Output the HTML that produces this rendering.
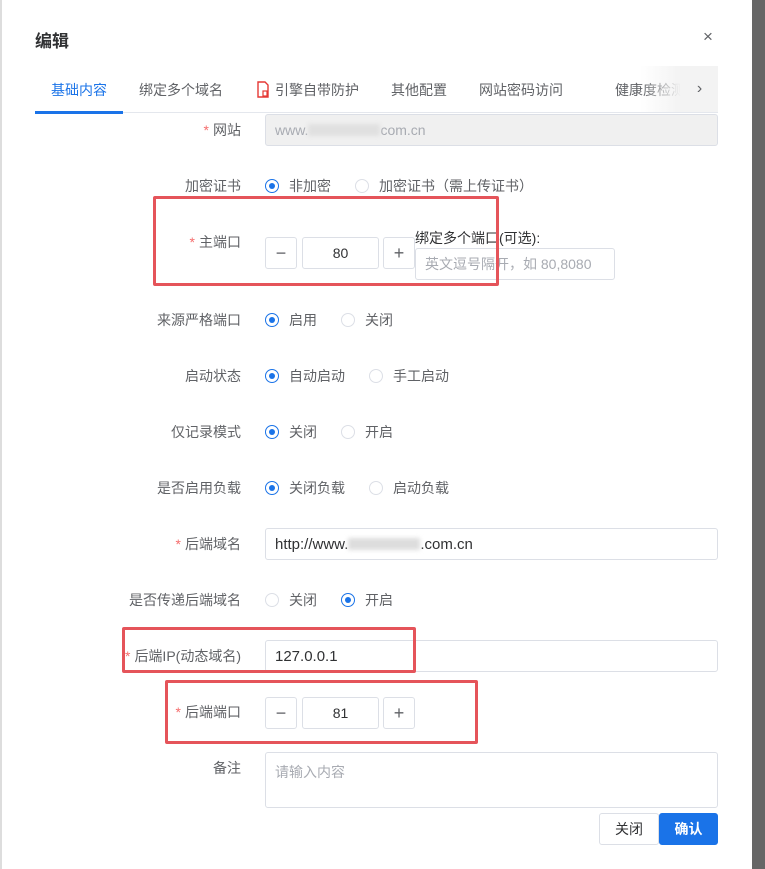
<!DOCTYPE html>
<html><head><meta charset="utf-8"><style>
*{margin:0;padding:0;box-sizing:border-box}
body{width:765px;height:869px;background:#fff;position:relative;overflow:hidden;font-family:"Liberation Sans","Noto Sans CJK SC",sans-serif;font-size:14px;color:#606266}
.a{position:absolute;white-space:nowrap}
.lbl{position:absolute;right:524px;font-size:14px;color:#606266;line-height:16px}
.lbl i{color:#f56c6c;font-style:normal;margin-right:4px}
.inp{position:absolute;border:1px solid #dcdfe6;border-radius:3px;background:#fff;font-size:14px;color:#303133;padding-left:9px;display:flex;align-items:center}
.btn{position:absolute;border:1px solid #dcdfe6;border-radius:3px;background:#fff;display:flex;align-items:center;justify-content:center;font-size:18px;color:#606266}
.r{position:absolute;width:14px;height:14px;border-radius:50%;border:1px solid #dcdfe6;background:#fff}
.r.on{border-color:#1a73e8}
.r.on:after{content:"";position:absolute;left:3px;top:3px;width:6px;height:6px;border-radius:50%;background:#1a73e8}
.rt{position:absolute;font-size:14px;color:#606266;line-height:16px}
.red{position:absolute;border:3px solid #e5545a;border-radius:2px}
.tab{position:absolute;top:80px;font-size:14px;color:#606266}
</style></head><body>
<div class="a" style="left:0;top:0;width:2px;height:869px;background:#ddd"></div>
<div class="a" style="left:752px;top:0;width:13px;height:869px;background:#666"></div>
<div class="a" style="left:35px;top:27px;font-size:17px;font-weight:bold;color:#303133">编辑</div>
<div class="a" style="left:703px;top:27px;font-size:17px;color:#606266">×</div>

<div class="a" style="left:35px;top:112px;width:683px;height:1px;background:#e4e7ed"></div>
<div class="a" style="left:35px;top:111px;width:88px;height:3px;background:#1a73e8"></div>
<div class="tab" style="left:51px;color:#1a73e8">基础内容</div>
<div class="tab" style="left:139px">绑定多个域名</div>
<svg class="a" style="left:256px;top:81px" width="14" height="17" viewBox="0 0 14 17"><path d="M2 1h7l3 3v12H2z" fill="none" stroke="#e53935" stroke-width="1.4"/><rect x="7" y="10" width="4" height="5" fill="none" stroke="#e53935" stroke-width="1.2"/></svg>
<div class="tab" style="left:275px">引擎自带防护</div>
<div class="tab" style="left:391px">其他配置</div>
<div class="tab" style="left:479px">网站密码访问</div>
<div class="tab" style="left:615px">健康度检测</div>
<div class="a" style="left:640px;top:66px;width:41px;height:46px;background:linear-gradient(to right,rgba(255,255,255,0),#f3f3f3)"></div>
<div class="a" style="left:681px;top:66px;width:37px;height:46px;background:#f3f3f3;text-align:center;line-height:46px;font-size:16px;color:#606266">›</div>

<div class="lbl" style="top:122px"><i>*</i>网站</div>
<div class="inp" style="left:265px;top:114px;width:453px;height:32px;background:#f0f0f0;color:#a8abb2">www.<span style="display:inline-block;width:72px;height:12px;background:#e0e0e0;filter:blur(2px)"></span>com.cn</div>

<div class="lbl" style="top:178px">加密证书</div>
<div class="r on" style="left:265px;top:179px"></div><div class="rt" style="left:289px;top:178px">非加密</div>
<div class="r" style="left:355px;top:179px"></div><div class="rt" style="left:379px;top:178px">加密证书（需上传证书）</div>

<div class="lbl" style="top:234px"><i>*</i>主端口</div>
<div class="btn" style="left:265px;top:237px;width:32px;height:32px">−</div>
<div class="inp" style="left:302px;top:237px;width:77px;height:32px;justify-content:center;padding:0">80</div>
<div class="btn" style="left:383px;top:237px;width:32px;height:32px">+</div>
<div class="a" style="left:415px;top:228px;font-size:14px;color:#303133">绑定多个端口(可选):</div>
<div class="inp" style="left:415px;top:248px;width:200px;height:32px;color:#a8abb2;font-size:14px">英文逗号隔开，如 80,8080</div>

<div class="lbl" style="top:312px">来源严格端口</div>
<div class="r on" style="left:265px;top:313px"></div><div class="rt" style="left:289px;top:312px">启用</div>
<div class="r" style="left:341px;top:313px"></div><div class="rt" style="left:365px;top:312px">关闭</div>

<div class="lbl" style="top:368px">启动状态</div>
<div class="r on" style="left:265px;top:369px"></div><div class="rt" style="left:289px;top:368px">自动启动</div>
<div class="r" style="left:369px;top:369px"></div><div class="rt" style="left:393px;top:368px">手工启动</div>

<div class="lbl" style="top:424px">仅记录模式</div>
<div class="r on" style="left:265px;top:425px"></div><div class="rt" style="left:289px;top:424px">关闭</div>
<div class="r" style="left:341px;top:425px"></div><div class="rt" style="left:365px;top:424px">开启</div>

<div class="lbl" style="top:480px">是否启用负载</div>
<div class="r on" style="left:265px;top:481px"></div><div class="rt" style="left:289px;top:480px">关闭负载</div>
<div class="r" style="left:369px;top:481px"></div><div class="rt" style="left:393px;top:480px">启动负载</div>

<div class="lbl" style="top:536px"><i>*</i>后端域名</div>
<div class="inp" style="left:265px;top:528px;width:453px;height:32px;font-size:15px">http://www.<span style="display:inline-block;width:72px;height:12px;background:#ddd;filter:blur(2px)"></span>.com.cn</div>

<div class="lbl" style="top:592px">是否传递后端域名</div>
<div class="r" style="left:265px;top:593px"></div><div class="rt" style="left:289px;top:592px">关闭</div>
<div class="r on" style="left:341px;top:593px"></div><div class="rt" style="left:365px;top:592px">开启</div>

<div class="lbl" style="top:648px"><i>*</i>后端IP(动态域名)</div>
<div class="inp" style="left:265px;top:640px;width:453px;height:32px;font-size:15px">127.0.0.1</div>

<div class="lbl" style="top:704px"><i>*</i>后端端口</div>
<div class="btn" style="left:265px;top:697px;width:32px;height:32px">−</div>
<div class="inp" style="left:302px;top:697px;width:77px;height:32px;justify-content:center;padding:0">81</div>
<div class="btn" style="left:383px;top:697px;width:32px;height:32px">+</div>

<div class="lbl" style="top:760px">备注</div>
<div class="inp" style="left:265px;top:752px;width:453px;height:56px;align-items:flex-start;padding-top:9px;color:#a8abb2;font-size:14px">请输入内容</div>

<div class="btn" style="left:599px;top:813px;width:60px;height:32px;font-size:14px;color:#303133">关闭</div>
<div class="btn" style="left:659px;top:813px;width:59px;height:32px;font-size:14px;color:#fff;background:#1a73e8;border-color:#1a73e8;font-weight:bold">确认</div>

<div class="red" style="left:153px;top:196px;width:346px;height:90px"></div>
<div class="red" style="left:122px;top:627px;width:294px;height:46px"></div>
<div class="red" style="left:165px;top:680px;width:313px;height:64px"></div>
</body></html>
